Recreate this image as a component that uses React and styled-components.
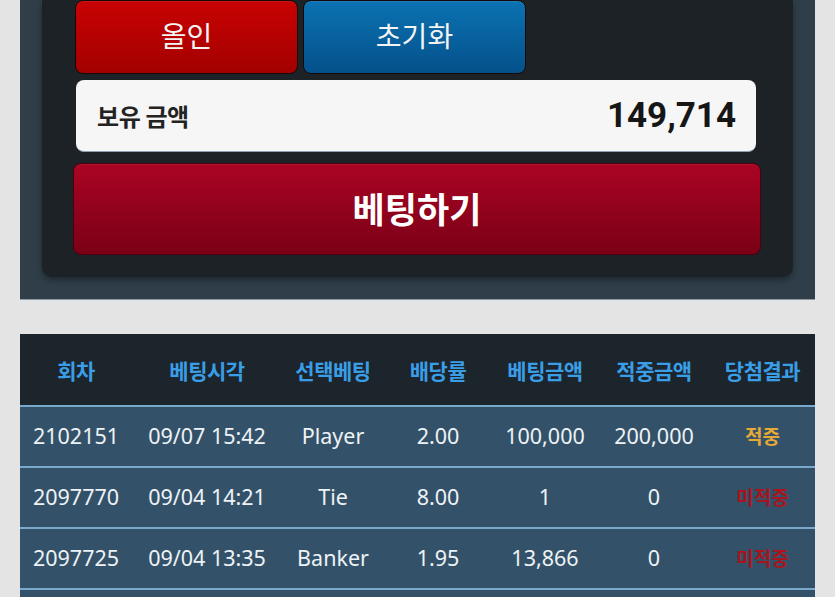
import React from "react";
import styled, { createGlobalStyle } from "styled-components";

const Global = createGlobalStyle`
  html, body { margin: 0; padding: 0; background: #e4e4e4; }
  body { font-family: "Noto Sans", "Noto Sans CJK KR", sans-serif; }
`;

const Page = styled.div`
  padding: 0 20px;
  background: #e4e4e4;
  height: 597px;
  overflow: hidden;
  box-sizing: border-box;
`;

const Panel = styled.section`
  background: #2f3e48;
  padding: 0 22px 22px;
  border-bottom: 1px solid #8a9aa6;
`;

const Card = styled.div`
  background: #1d2226;
  border-radius: 0 0 10px 10px;
  padding: 0 32px 22px 31px;
  box-shadow: 0 3px 6px rgba(0, 0, 0, 0.35);
  display: flex;
  flex-direction: column;
`;

const ButtonRow = styled.div`
  display: grid;
  grid-template-columns: repeat(3, 223px);
  gap: 5px;
  margin-left: 2px;
`;

const ActionButton = styled.button`
  height: 74px;
  border-radius: 8px;
  border: 1px solid #150808;
  background: ${(p) =>
    p.$tone === "blue"
      ? "linear-gradient(#0b72b2, #04518a)"
      : "linear-gradient(#c80202, #a30000)"};
  color: #f4f4f4;
  font-family: "Noto Sans CJK KR", "Noto Sans", sans-serif;
  font-size: 28px;
  font-weight: 400;
  padding: 0 0 4px;
  box-shadow: inset 0 1px 0 rgba(255, 255, 255, 0.08);
`;

const Balance = styled.div`
  margin: 6px 5px 0 3px;
  height: 72px;
  background: #f6f6f7;
  border-radius: 8px;
  border-bottom: 1px solid #8ea0b0;
  box-sizing: border-box;
  display: flex;
  align-items: center;
  justify-content: space-between;
  padding: 0 20px 0 21px;
`;

const BalanceLabel = styled.span`
  font-family: "Noto Sans CJK KR", sans-serif;
  font-weight: 700;
  font-size: 24px;
  letter-spacing: -0.4px;
  color: #232323;
`;

const BalanceValue = styled.span`
  font-family: Roboto, "Noto Sans", sans-serif;
  font-weight: 700;
  font-size: 35px;
  color: #161616;
`;

const BetButton = styled.button`
  margin-top: 11px;
  height: 92px;
  border-radius: 8px;
  border: 1px solid #4a0010;
  background: linear-gradient(#aa0423, #7a0016);
  color: #ffffff;
  font-family: "Noto Sans CJK KR", sans-serif;
  font-weight: 700;
  font-size: 35px;
  padding: 0 0 4px;
  box-shadow: inset 0 1px 0 rgba(255, 255, 255, 0.06);
`;

const Table = styled.table`
  margin-top: 34px;
  width: 100%;
  border-collapse: collapse;
  table-layout: fixed;
`;

const HeadCell = styled.th`
  background: #1c242c;
  height: 69px;
  padding: 1px 0 1px;
  color: #3a9ee6;
  font-family: "Noto Sans CJK KR", sans-serif;
  font-weight: 700;
  font-size: 21px;
  letter-spacing: -0.5px;
  text-align: center;
  border-bottom: 2px solid #78a8cc;
  white-space: nowrap;
`;

const Row = styled.tr`
  background: #33526a;
`;

const Cell = styled.td`
  height: 57px;
  padding: 0 0 2px;
  text-align: center;
  color: ${(p) => p.$color || "#eef2f5"};
  font-family: ${(p) =>
    p.$kr ? '"Noto Sans CJK KR", sans-serif' : '"Noto Sans", "Noto Sans CJK KR", sans-serif'};
  font-size: ${(p) => (p.$kr ? "19px" : "21.5px")};
  font-weight: ${(p) => (p.$kr ? 700 : 400)};
  border-bottom: 2px solid #78a8cc;
  white-space: nowrap;
`;

const cols = [
  { label: "회차", w: 112 },
  { label: "베팅시각", w: 150 },
  { label: "선택베팅", w: 102 },
  { label: "배당률", w: 108 },
  { label: "베팅금액", w: 106 },
  { label: "적중금액", w: 112 },
  { label: "당첨결과", w: 105 },
];

const rows = [
  ["2102151", "09/07 15:42", "Player", "2.00", "100,000", "200,000", "적중"],
  ["2097770", "09/04 14:21", "Tie", "8.00", "1", "0", "미적중"],
  ["2097725", "09/04 13:35", "Banker", "1.95", "13,866", "0", "미적중"],
];

export default function App() {
  return (
    <>
      <Global />
      <Page>
        <Panel>
          <Card>
            <ButtonRow>
              <ActionButton $tone="red">올인</ActionButton>
              <ActionButton $tone="blue">초기화</ActionButton>
            </ButtonRow>
            <Balance>
              <BalanceLabel>보유 금액</BalanceLabel>
              <BalanceValue>149,714</BalanceValue>
            </Balance>
            <BetButton>베팅하기</BetButton>
          </Card>
        </Panel>
        <Table>
          <colgroup>
            {cols.map((c) => (
              <col key={c.label} style={{ width: c.w }} />
            ))}
          </colgroup>
          <thead>
            <tr>
              {cols.map((c) => (
                <HeadCell key={c.label}>{c.label}</HeadCell>
              ))}
            </tr>
          </thead>
          <tbody>
            {rows.map((r) => (
              <Row key={r[0]}>
                {r.slice(0, 6).map((v, i) => (
                  <Cell key={i}>{v}</Cell>
                ))}
                <Cell $kr $color={r[6] === "적중" ? "#e6a935" : "#aa141d"}>
                  {r[6]}
                </Cell>
              </Row>
            ))}
            <Row>
              {cols.map((c) => (
                <Cell key={c.label} />
              ))}
            </Row>
          </tbody>
        </Table>
      </Page>
    </>
  );
}
